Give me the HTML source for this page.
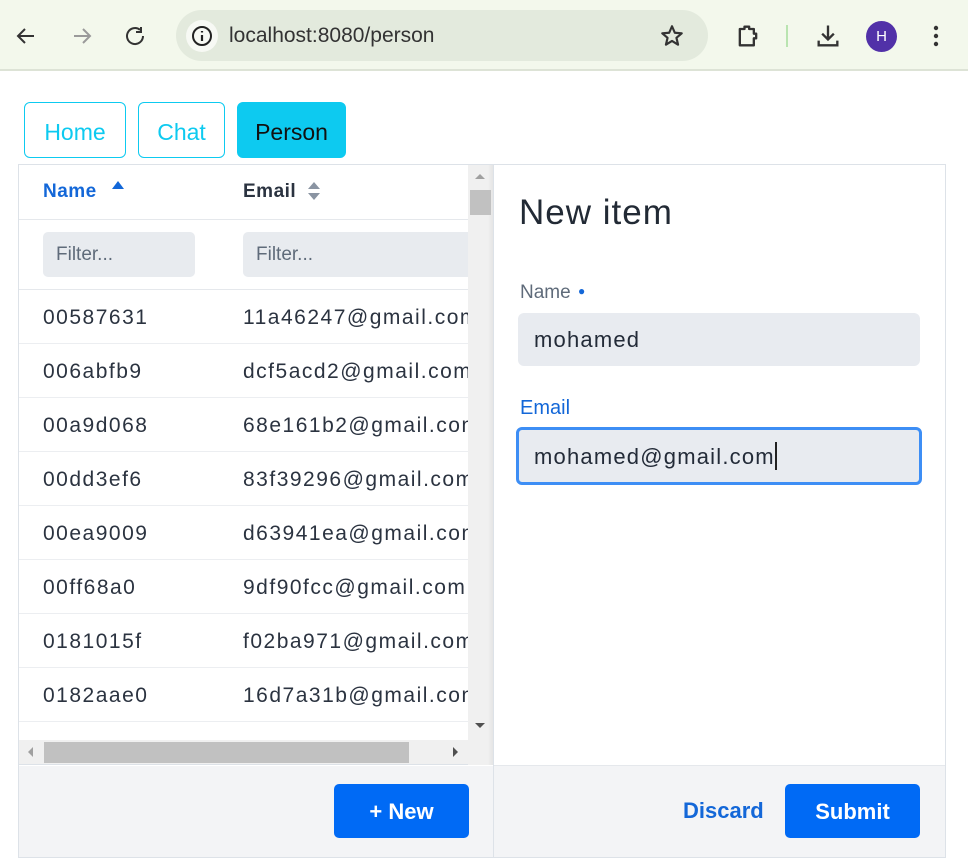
<!DOCTYPE html>
<html><head><style>
*{box-sizing:border-box;margin:0;padding:0}
body{width:968px;height:863px;overflow:hidden;background:#fff;font-family:"Liberation Sans",sans-serif;position:relative}
.abs{position:absolute}
.chrome{left:0;top:0;width:968px;height:71px;background:#f3f8ec;border-bottom:2px solid #dde3d6}
.url{left:176px;top:10px;width:532px;height:51px;border-radius:26px;background:#e3eadd}
.tab{top:102px;height:56px;border:1px solid #0dcaf0;border-radius:6px;color:#0dcaf0;font-size:23px;line-height:58px;text-align:center}
.panel{left:18px;top:164px;width:928px;height:694px;border:1px solid #dde2e8}
.row{position:absolute;left:19px;width:449px;height:54px;border-bottom:1px solid #eceef1;font-size:21px;color:#2b3340;line-height:56px;letter-spacing:1.5px;white-space:nowrap;overflow:hidden}
.row span{position:absolute}
.filter{position:absolute;top:232px;height:45px;background:#e8ebef;border-radius:5px;color:#5f6b7a;font-size:19px;line-height:46px;padding-left:13px}
.inp{position:absolute;left:518px;width:402px;height:53px;background:#e8ebf0;border-radius:6px;font-size:22px;color:#232b38;line-height:54px;padding-left:16px;letter-spacing:1.2px}
</style></head><body>
<div class="abs chrome"></div>
<svg class="abs" style="left:14px;top:24px" width="130" height="24" viewBox="0 0 130 24">
<path d="M20 12H5M11 5l-7 7 7 7" stroke="#333" stroke-width="2" fill="none"/>
<path d="M60 12h15M69 5l7 7-7 7" stroke="#9a9a9a" stroke-width="2" fill="none"/>
<path d="M129 12a8 8 0 1 1-3-6.2M127 3v5h-5" stroke="#333" stroke-width="2" fill="none"/>
</svg>
<div class="abs url"></div>
<div class="abs" style="left:186px;top:20px;width:32px;height:32px;border-radius:16px;background:#f7f9f4"></div>
<svg class="abs" style="left:190px;top:24px" width="24" height="24"><circle cx="12" cy="12" r="9" stroke="#222" stroke-width="2" fill="none"/><path d="M12 11v6M12 7v1.5" stroke="#222" stroke-width="2.2"/></svg>
<div class="abs" style="left:229px;top:24px;font-size:21px;color:#333">localhost:8080/person</div>
<svg class="abs" style="left:659px;top:23px" width="26" height="26" viewBox="0 0 24 24"><path d="M12 3l2.6 6 6.4.5-4.9 4.2 1.5 6.3L12 16.6 6.4 20l1.5-6.3L3 9.5 9.4 9z" stroke="#333" stroke-width="2" fill="none" stroke-linejoin="round"/></svg>
<svg class="abs" style="left:734px;top:22px" width="28" height="28" viewBox="0 0 24 24"><path d="M5 6h4V4h4v2h4v4h2v4h-2v6H5z" stroke="#333" stroke-width="2" fill="none" stroke-linejoin="round"/></svg>
<div class="abs" style="left:786px;top:25px;width:2px;height:22px;background:#b9e4b0"></div>
<svg class="abs" style="left:814px;top:22px" width="28" height="28" viewBox="0 0 24 24"><path d="M12 3v12M7 10l5 5 5-5M4 16v4h16v-4" stroke="#333" stroke-width="2" fill="none"/></svg>
<div class="abs" style="left:866px;top:21px;width:31px;height:31px;border-radius:16px;background:#5131a8;color:#fff;font-size:15px;line-height:31px;text-align:center">H</div>
<svg class="abs" style="left:930px;top:24px" width="12" height="24"><circle cx="6" cy="4" r="2.2" fill="#333"/><circle cx="6" cy="12" r="2.2" fill="#333"/><circle cx="6" cy="20" r="2.2" fill="#333"/></svg>

<div class="abs tab" style="left:24px;width:102px">Home</div>
<div class="abs tab" style="left:138px;width:87px">Chat</div>
<div class="abs tab" style="left:237px;width:109px;background:#0dcaf0;color:#111">Person</div>

<div class="abs panel"></div>
<div class="row" style="top:165px;height:55px;line-height:54px;font-weight:bold;font-size:19px;border-bottom:1px solid #e5e8ec;letter-spacing:0.5px">
<span style="left:24px;color:#1367d8">Name</span>
<svg style="position:absolute;left:93px;top:16px" width="12" height="8"><path d="M0 8L6 0 12 8z" fill="#1367d8"/></svg>
<span style="left:224px;color:#2b3340">Email</span>
<svg style="position:absolute;left:289px;top:17px" width="12" height="18"><path d="M0 7L6 0 12 7zM0 11L6 18 12 11z" fill="#8a94a2"/></svg>
</div>
<div class="row" style="top:220px;height:70px;border-bottom:1px solid #e5e8ec"></div>
<div class="filter" style="left:43px;width:152px">Filter...</div>
<div class="filter" style="left:243px;width:225px;border-radius:5px 0 0 5px">Filter...</div>

<div class="row" style="top:290px"><span style="left:24px">00587631</span><span style="left:224px">11a46247@gmail.com</span></div>
<div class="row" style="top:344px"><span style="left:24px">006abfb9</span><span style="left:224px">dcf5acd2@gmail.com</span></div>
<div class="row" style="top:398px"><span style="left:24px">00a9d068</span><span style="left:224px">68e161b2@gmail.com</span></div>
<div class="row" style="top:452px"><span style="left:24px">00dd3ef6</span><span style="left:224px">83f39296@gmail.com</span></div>
<div class="row" style="top:506px"><span style="left:24px">00ea9009</span><span style="left:224px">d63941ea@gmail.com</span></div>
<div class="row" style="top:560px"><span style="left:24px">00ff68a0</span><span style="left:224px">9df90fcc@gmail.com</span></div>
<div class="row" style="top:614px"><span style="left:24px">0181015f</span><span style="left:224px">f02ba971@gmail.com</span></div>
<div class="row" style="top:668px"><span style="left:24px">0182aae0</span><span style="left:224px">16d7a31b@gmail.com</span></div>
<div class="abs" style="left:468px;top:165px;width:26px;height:600px;background:linear-gradient(90deg,#f0f0f0 0,#f0f0f0 20px,#e2e2e2 26px)"></div>
<svg class="abs" style="left:474px;top:172px" width="12" height="8"><path d="M1 7L6 2 11 7z" fill="#a0a0a0"/></svg>
<div class="abs" style="left:470px;top:190px;width:21px;height:25px;background:#c1c1c1"></div>
<svg class="abs" style="left:474px;top:722px" width="12" height="8"><path d="M1 1L6 6 11 1z" fill="#505050"/></svg>
<div class="abs" style="left:19px;top:740px;width:449px;height:25px;background:#f0f0f0;border-bottom:1px solid #dde2e8"></div>
<svg class="abs" style="left:26px;top:746px" width="8" height="12"><path d="M7 1L2 6 7 11z" fill="#a0a0a0"/></svg>
<div class="abs" style="left:44px;top:742px;width:365px;height:21px;background:#c1c1c1"></div>
<svg class="abs" style="left:452px;top:746px" width="8" height="12"><path d="M1 1L6 6 1 11z" fill="#505050"/></svg>
<div class="abs" style="left:19px;top:766px;width:475px;height:91px;background:#f3f4f6"></div>
<div class="abs" style="left:334px;top:784px;width:135px;height:54px;background:#006af5;border-radius:5px;color:#fff;font-weight:bold;font-size:22px;line-height:55px;text-align:center">+ New</div>
<div class="abs" style="left:493px;top:165px;width:1px;height:692px;background:#dde2e8"></div>
<div class="abs" style="left:519px;top:193px;font-size:35px;color:#222a35;letter-spacing:1px">New item</div>
<div class="abs" style="left:520px;top:282px;font-size:19px;color:#5f6b7a">Name <span style="color:#1367d8;font-size:12px;position:relative;top:-3px;left:2px">●</span></div>
<div class="inp" style="top:313px">mohamed</div>
<div class="abs" style="left:520px;top:397px;font-size:20px;color:#1367d8">Email</div>
<div class="inp" style="top:427px;left:516px;width:406px;height:58px;border:3px solid #3d8ef5;padding-left:15px;line-height:54px">mohamed@gmail.com<span style="display:inline-block;width:2px;height:28px;background:#222;vertical-align:middle;margin-top:-4px"></span></div>
<div class="abs" style="left:494px;top:765px;width:451px;height:92px;background:#f3f4f6;border-top:1px solid #e5e8ec"></div>
<div class="abs" style="left:683px;top:798px;font-size:22px;color:#1367d8;font-weight:bold">Discard</div>
<div class="abs" style="left:785px;top:784px;width:135px;height:54px;background:#006af5;border-radius:5px;color:#fff;font-weight:bold;font-size:22px;line-height:55px;text-align:center">Submit</div>
</body></html>
